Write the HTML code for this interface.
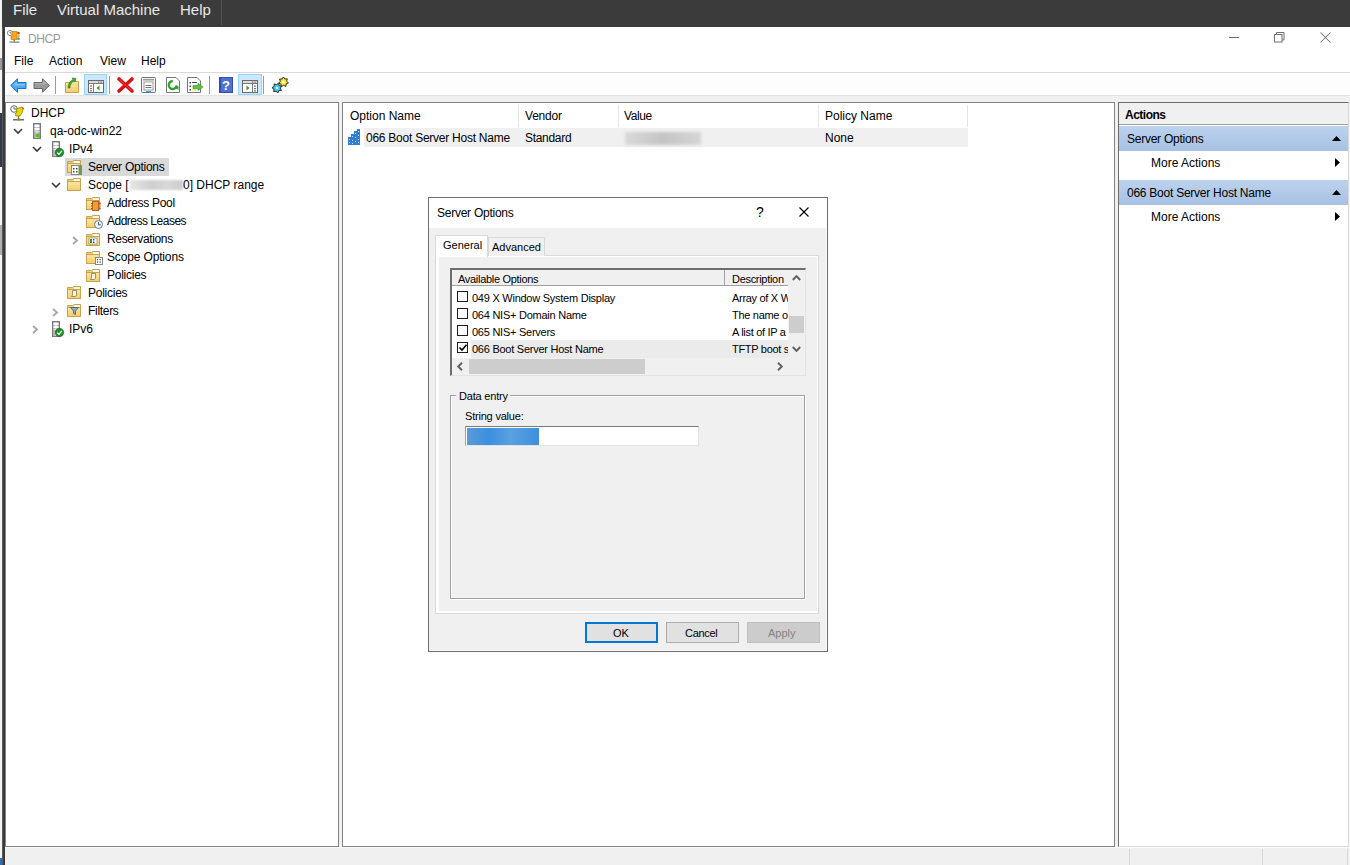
<!DOCTYPE html>
<html><head><meta charset="utf-8">
<style>
*{box-sizing:border-box}
html,body{margin:0;padding:0}
body{width:1350px;height:865px;overflow:hidden;position:relative;background:#f0f0f0;font-family:"Liberation Sans",sans-serif;font-size:12px;color:#000}
.a{position:absolute}
.t{position:absolute;white-space:nowrap;line-height:18px;height:18px}
.s11{font-size:11px}
svg{position:absolute;overflow:visible}
</style></head><body>


<svg width="0" height="0" style="position:absolute;left:0;top:0">
<defs>
<linearGradient id="gFold" x1="0" y1="0" x2="0" y2="1"><stop offset="0" stop-color="#fbe6a6"/><stop offset="1" stop-color="#f3cd6b"/></linearGradient>
<linearGradient id="gTower" x1="0" y1="0" x2="1" y2="0"><stop offset="0" stop-color="#9a9a9a"/><stop offset="0.5" stop-color="#d8d8d8"/><stop offset="1" stop-color="#8a8a8a"/></linearGradient>
<linearGradient id="gBand" x1="0" y1="0" x2="0" y2="1"><stop offset="0" stop-color="#bdd4ef"/><stop offset="1" stop-color="#a6c0e2"/></linearGradient>
</defs></svg>

<!-- VM host strip left -->
<div class="a" style="left:0;top:0;width:2px;height:865px;background:#f4f4f4"></div>
<div class="a" style="left:0;top:58px;width:2px;height:12px;background:#9a9a9a"></div>
<div class="a" style="left:0;top:113px;width:2px;height:54px;background:#2f3b4a"></div>
<div class="a" style="left:0;top:225px;width:2px;height:30px;background:#b0b0b0"></div>
<div class="a" style="left:0;top:858px;width:2px;height:7px;background:#2a6fc0"></div>
<div class="a" style="left:2px;top:0;width:3px;height:865px;background:#3a3a3a;border-left:1px solid #5a5a5a"></div>

<!-- VM top bar -->
<div class="a" style="left:2px;top:0;width:1348px;height:27px;background:#3b3b3b"></div>
<div class="t" style="left:13px;top:-2px;font-size:15px;color:#e8e8e8;line-height:24px;height:24px">File</div>
<div class="t" style="left:57px;top:-2px;font-size:15px;color:#e8e8e8;line-height:24px;height:24px">Virtual Machine</div>
<div class="t" style="left:180px;top:-2px;font-size:15px;color:#e8e8e8;line-height:24px;height:24px">Help</div>
<div class="a" style="left:221px;top:0;width:1px;height:25px;background:#555"></div>

<!-- MMC window -->
<div class="a" style="left:5px;top:27px;width:1345px;height:838px;background:#fff"></div>

<!-- title bar -->
<div class="t" style="left:28px;top:30px;color:#999;letter-spacing:-0.4px">DHCP</div>
<!-- menu bar -->
<div class="t" style="left:14px;top:52px">File</div>
<div class="t" style="left:49px;top:52px">Action</div>
<div class="t" style="left:100px;top:52px">View</div>
<div class="t" style="left:141px;top:52px">Help</div>
<div class="a" style="left:5px;top:72px;width:1345px;height:1px;background:#d9d9d9"></div>

<!-- title bar icon & buttons -->
<svg style="left:7px;top:30px" width="14" height="13" viewBox="0 0 14 13">
 <circle cx="3" cy="3" r="2.6" fill="#fff" stroke="#777" stroke-width="0.8"/>
 <path d="M3 1.5 V3 H4.5" stroke="#556" stroke-width="0.7" fill="none"/>
 <path d="M5 1.5 H10 V9.5 H4 V6 H5Z" fill="#f5a623" stroke="#b87010" stroke-width="0.6"/>
 <circle cx="11.5" cy="3" r="1.3" fill="#e03020"/>
 <circle cx="11.5" cy="6" r="1.3" fill="#e0c000"/>
 <circle cx="11.5" cy="8.8" r="1.3" fill="#2a90d0"/>
 <rect x="6.5" y="9.5" width="1.5" height="2" fill="#b87010"/>
 <rect x="2.5" y="11.5" width="10" height="1.2" fill="#7a7a7a"/>
</svg>
<div class="a" style="left:1229px;top:37px;width:10px;height:1px;background:#707070"></div>
<svg style="left:1274px;top:32px" width="11" height="11" viewBox="0 0 11 11"><rect x="0.5" y="2.5" width="7.5" height="7.5" fill="none" stroke="#707070" stroke-width="1"/><path d="M2.5 2.5 V0.5 H10 V8 H8" fill="none" stroke="#707070" stroke-width="1"/></svg>
<svg style="left:1320px;top:32px" width="11" height="11"><path d="M0.5 0.5 L10.5 10.5 M10.5 0.5 L0.5 10.5" stroke="#707070" stroke-width="1.05" fill="none"/></svg>

<!-- toolbar -->
<div class="a" style="left:5px;top:73px;width:1345px;height:22px;background:#fdfdfd"></div>
<svg style="left:10px;top:78px" width="17" height="15" viewBox="0 0 17 15"><path d="M0.7 7.5 L7.5 0.7 V4.5 H16 V10.5 H7.5 V14.3Z" fill="#4aa8f5" stroke="#1b6fd0" stroke-width="1"/><path d="M3 7.5 L7 3.5 V6 H15 V7.5Z" fill="#9fd3ff" opacity="0.7"/></svg>
<svg style="left:33px;top:78px" width="17" height="15" viewBox="0 0 17 15"><path d="M16.3 7.5 L9.5 0.7 V4.5 H1 V10.5 H9.5 V14.3Z" fill="#9a9a9a" stroke="#666" stroke-width="1"/><path d="M1.5 5 H10 V2 L14 6 H1.5Z" fill="#bdbdbd" opacity="0.7"/></svg>
<div class="a" style="left:55px;top:76px;width:1px;height:18px;background:#9a9a9a"></div>
<svg style="left:65px;top:77px" width="15" height="16" viewBox="0 0 15 16"><path d="M0.5 5.5 H5 L6 4.5 H13.5 V15.5 H0.5Z" fill="url(#gFold)" stroke="#c8a24e"/><path d="M3 11 C3 7 5 4 8 2.5 L7 1 L11 1.5 L10 5 L9 3.8 C6.5 5 5 8 5 11Z" fill="#3fae2a" stroke="#247a18" stroke-width="0.6"/></svg>
<div class="a" style="left:84px;top:74px;width:23px;height:21px;background:#cce8ff;border:1px solid #99d1ff"></div>
<svg style="left:88px;top:80px" width="16" height="13" viewBox="0 0 16 13"><rect x="0.5" y="0.5" width="15" height="12" fill="#fff" stroke="#6a6a6a"/><rect x="1" y="1" width="14" height="2.5" fill="#dcdcdc"/><line x1="1" y1="3.5" x2="15" y2="3.5" stroke="#7a7a7a"/><rect x="10" y="1.5" width="1.2" height="1.2" fill="#666"/><rect x="12.5" y="1.5" width="1.2" height="1.2" fill="#666"/><line x1="5.5" y1="4" x2="5.5" y2="12" stroke="#7a7a7a"/><rect x="2" y="5.5" width="2" height="1.2" fill="#777"/><rect x="2" y="8" width="2" height="1.2" fill="#777"/><rect x="2" y="10.2" width="2" height="1.2" fill="#777"/><path d="M11.5 5.5 V10.5 L8.5 8Z" fill="#35a02a"/></svg>
<div class="a" style="left:109px;top:76px;width:1px;height:18px;background:#9a9a9a"></div>
<svg style="left:117px;top:77px" width="17" height="16" viewBox="0 0 17 16"><path d="M2 2 L15 14 M15 2 L2 14" stroke="#d81010" stroke-width="3.6" stroke-linecap="round"/><path d="M2.5 2.5 L14.5 13.5" stroke="#ff6a6a" stroke-width="1" opacity="0.6"/></svg>
<svg style="left:141px;top:77px" width="15" height="16" viewBox="0 0 15 16"><rect x="0.5" y="0.5" width="14" height="15" rx="1" fill="#f4f4f4" stroke="#707070"/><rect x="2" y="2" width="11" height="1.5" fill="#9a9a9a"/><rect x="3" y="5" width="9" height="8" fill="#fff" stroke="#8a8a8a" stroke-width="0.8"/><rect x="4.5" y="8" width="6" height="1" fill="#777"/><rect x="4.5" y="10" width="6" height="1" fill="#777"/><rect x="5" y="14" width="5" height="1.5" fill="#3a9ae8"/></svg>
<svg style="left:166px;top:77px" width="14" height="16" viewBox="0 0 14 16"><path d="M0.5 0.5 H10 L13.5 4 V15.5 H0.5Z" fill="#fff" stroke="#777"/><path d="M6.8 4 A4 4 0 1 0 10.8 8.5" stroke="#2aa02a" stroke-width="2.4" fill="none"/><path d="M9 11 L12.5 9 L12.5 12.8Z" fill="#2aa02a"/></svg>
<svg style="left:187px;top:77px" width="17" height="16" viewBox="0 0 17 16"><path d="M0.5 0.5 H10 L13.5 4 V15.5 H0.5Z" fill="#fff" stroke="#777"/><g fill="#444"><rect x="2.5" y="5" width="1.5" height="1.5"/><rect x="2.5" y="8.5" width="1.5" height="1.5"/><rect x="2.5" y="12" width="1.5" height="1.5"/><rect x="5" y="5" width="5" height="1"/></g><path d="M6 8.5 H11 V6.5 L16 10 L11 13.5 V11.5 H6Z" fill="#5ac83a" stroke="#2f8a20" stroke-width="0.6"/><rect x="5" y="12" width="4" height="1.5" fill="#f0e060"/></svg>
<div class="a" style="left:209px;top:76px;width:1px;height:18px;background:#9a9a9a"></div>
<svg style="left:219px;top:77px" width="14" height="16" viewBox="0 0 14 16"><rect x="0" y="0" width="14" height="16" fill="#2f4fb0"/><rect x="2" y="1" width="11" height="14" fill="#4f70d0"/><text x="7" y="13" font-family="Liberation Sans" font-size="13" fill="#fff" text-anchor="middle" font-weight="bold">?</text></svg>
<div class="a" style="left:238px;top:74px;width:24px;height:21px;background:#cce8ff;border:1px solid #99d1ff"></div>
<svg style="left:242px;top:80px" width="16" height="13" viewBox="0 0 16 13"><rect x="0.5" y="0.5" width="15" height="12" fill="#fff" stroke="#6a6a6a"/><rect x="1" y="1" width="14" height="2.5" fill="#dcdcdc"/><line x1="1" y1="3.5" x2="15" y2="3.5" stroke="#7a7a7a"/><rect x="10" y="1.5" width="1.2" height="1.2" fill="#666"/><rect x="12.5" y="1.5" width="1.2" height="1.2" fill="#666"/><line x1="10.5" y1="4" x2="10.5" y2="12" stroke="#7a7a7a"/><rect x="12" y="5.5" width="2" height="1.2" fill="#777"/><rect x="12" y="8" width="2" height="1.2" fill="#777"/><rect x="12" y="10.2" width="2" height="1.2" fill="#777"/><path d="M4.5 5.5 V10.5 L7.5 8Z" fill="#35a02a"/></svg>
<div class="a" style="left:263px;top:76px;width:1px;height:18px;background:#9a9a9a"></div>
<svg style="left:272px;top:77px" width="17" height="16" viewBox="0 0 17 16"><path d="M9.4 13.4 L6.9 13.7 L5.9 15.9 L4.1 14.2 L1.7 14.7 L2.0 12.3 L0.0 10.7 L2.1 9.4 L2.1 6.9 L4.4 7.7 L6.4 6.2 L7.2 8.5 L9.6 9.1 L8.3 11.2Z" fill="#3cc8f0" stroke="#1a1a1a" stroke-width="0.9"/><circle cx="5" cy="11" r="1.2" fill="#fff"/><path d="M16.4 6.0 L14.1 7.0 L13.8 9.5 L11.6 8.3 L9.4 9.6 L9.0 7.1 L6.7 6.2 L8.3 4.3 L7.5 2.0 L10.0 2.1 L11.4 0.0 L12.9 2.0 L15.3 1.8 L14.7 4.2Z" fill="#f5e62a" stroke="#1a1a1a" stroke-width="0.9"/><circle cx="11.5" cy="5" r="1.2" fill="#fff"/></svg>

<!-- toolbar strip bottom -->
<div class="a" style="left:5px;top:95px;width:1345px;height:1px;background:#e3e3e3"></div>
<div class="a" style="left:5px;top:96px;width:1345px;height:6px;background:#f0f0f0"></div>

<!-- panes area background -->
<div class="a" style="left:5px;top:102px;width:1345px;height:763px;background:#f0f0f0"></div>

<!-- left pane -->
<div class="a" style="left:5px;top:102px;width:334px;height:745px;background:#fff;border:1px solid #828282"></div>
<!-- center pane -->
<div class="a" style="left:342px;top:102px;width:773px;height:745px;background:#fff;border:1px solid #828282"></div>
<!-- actions pane -->
<div class="a" style="left:1118px;top:102px;width:231px;height:745px;background:#fff;border:1px solid #dcdcdc;border-left-color:#6d6d6d;border-top-color:#6d6d6d"></div>

<!-- status bar -->
<div class="a" style="left:5px;top:847px;width:1345px;height:1px;background:#fbfbfb"></div>
<div class="a" style="left:1129px;top:849px;width:1px;height:16px;background:#d7d7d7"></div>
<div class="a" style="left:1262px;top:849px;width:1px;height:16px;background:#d7d7d7"></div>
<div class="a" style="left:1347px;top:849px;width:1px;height:16px;background:#d7d7d7"></div>


<!-- TREE -->
<div class="a" style="left:65px;top:158px;width:104px;height:18px;background:#d9d9d9"></div>
<div class="t" style="left:31px;top:104px">DHCP</div>
<div class="t" style="left:50px;top:122px">qa-odc-win22</div>
<div class="t" style="left:69px;top:140px">IPv4</div>
<div class="t" style="left:88px;top:158px;letter-spacing:-0.25px">Server Options</div>
<div class="t" style="left:88px;top:176px">Scope [</div>
<div class="a" style="left:130px;top:180px;width:53px;height:10px;background:linear-gradient(90deg,#e6e6e6,#cfcfcf 40%,#d8d8d8 70%,#cccccc);filter:blur(1px)"></div>
<div class="t" style="left:183px;top:176px">0] DHCP range</div>
<div class="t" style="left:107px;top:194px;letter-spacing:-0.3px">Address Pool</div>
<div class="t" style="left:107px;top:212px;letter-spacing:-0.5px">Address Leases</div>
<div class="t" style="left:107px;top:230px;letter-spacing:-0.35px">Reservations</div>
<div class="t" style="left:107px;top:248px;letter-spacing:-0.15px">Scope Options</div>
<div class="t" style="left:107px;top:266px;letter-spacing:-0.25px">Policies</div>
<div class="t" style="left:88px;top:284px;letter-spacing:-0.25px">Policies</div>
<div class="t" style="left:88px;top:302px;letter-spacing:-0.3px">Filters</div>
<div class="t" style="left:69px;top:320px">IPv6</div>


<!-- tree icons -->
<svg style="left:10px;top:105px" width="15" height="16" viewBox="0 0 15 16">
 <circle cx="4" cy="4" r="3.3" fill="#fff" stroke="#666" stroke-width="1"/>
 <path d="M4 2 V4 H6" stroke="#555" stroke-width="0.9" fill="none"/>
 <path d="M6 4 L9 3 L12 2 L13 4 L12 8 L10 11 L6 11 L5 9 L7 7Z" fill="#e8d800" stroke="#8a8a00" stroke-width="0.8"/>
 <path d="M12 2 L14 3 L13 5Z" fill="#e03010"/>
 <rect x="8" y="11" width="1" height="3" fill="#777"/>
 <rect x="3" y="14" width="11" height="1.5" fill="#6a6a6a"/>
 <rect x="7" y="13.5" width="3" height="2" fill="#8a9a00"/>
</svg>
<svg style="left:13px;top:128px" width="10" height="6"><path d="M1 1 L5 5 L9 1" stroke="#3c3c3c" stroke-width="1.6" fill="none"/></svg>
<svg style="left:33px;top:123px" width="8" height="16" viewBox="0 0 8 16"><rect x="0.5" y="0.5" width="7" height="15" fill="url(#gTower)" stroke="#7a7a7a"/>
 <rect x="1.5" y="2" width="5" height="2" fill="#fff"/>
 <rect x="1.5" y="5" width="5" height="2" fill="#fff"/>
 <rect x="1.5" y="8" width="5" height="1" fill="#e0e0e0"/></svg>
<svg style="left:35px;top:133px" width="5" height="5"><circle cx="2.5" cy="2.5" r="2" fill="#58c020"/></svg>
<svg style="left:32px;top:146px" width="10" height="6"><path d="M1 1 L5 5 L9 1" stroke="#3c3c3c" stroke-width="1.6" fill="none"/></svg>
<svg style="left:52px;top:141px" width="8" height="16" viewBox="0 0 8 16"><rect x="0.5" y="0.5" width="7" height="15" fill="url(#gTower)" stroke="#7a7a7a"/>
 <rect x="1.5" y="2" width="5" height="2" fill="#fff"/>
 <rect x="1.5" y="5" width="5" height="2" fill="#fff"/>
 <rect x="1.5" y="8" width="5" height="1" fill="#e0e0e0"/></svg>
<svg style="left:55px;top:148px" width="9" height="9" viewBox="0 0 9 9"><circle cx="4.5" cy="4.5" r="4.2" fill="#1f8f2a" stroke="#0f5e16" stroke-width="0.6"/>
 <path d="M2.2 4.6 L3.9 6.3 L6.9 2.8" stroke="#fff" stroke-width="1.3" fill="none"/></svg>
<svg style="left:67px;top:160px" width="14" height="13" viewBox="0 0 14 13"><path d="M0.5 1.5 H5.5 L6.5 0.5 H13.5 V12.5 H0.5Z" fill="#f1cf77" stroke="#c8a24e" stroke-width="1"/>
 <path d="M7 1.2 H12.8 V3 H7Z" fill="#fff"/>
 <path d="M0.5 3.5 H13.5 V12.5 H0.5Z" fill="url(#gFold)" stroke="#c8a24e" stroke-width="1"/></svg>
<svg style="left:71px;top:165px" width="11" height="10" viewBox="0 0 11 10"><rect x="0.5" y="0.5" width="10" height="9" fill="#fff" stroke="#888"/><rect x="2" y="3" width="1.5" height="1.5" fill="#444"/><rect x="5" y="3" width="1.5" height="1.5" fill="#444"/><rect x="2" y="6" width="1.5" height="1.5" fill="#444"/><rect x="5" y="6" width="1.5" height="1.5" fill="#444"/><rect x="7.5" y="1" width="2.5" height="8" fill="#6a9a50"/></svg>
<svg style="left:51px;top:182px" width="10" height="6"><path d="M1 1 L5 5 L9 1" stroke="#3c3c3c" stroke-width="1.6" fill="none"/></svg>
<svg style="left:67px;top:178px" width="14" height="13" viewBox="0 0 14 13"><path d="M0.5 1.5 H5.5 L6.5 0.5 H13.5 V12.5 H0.5Z" fill="#f1cf77" stroke="#c8a24e" stroke-width="1"/>
 <path d="M7 1.2 H12.8 V3 H7Z" fill="#fff"/>
 <path d="M0.5 3.5 H13.5 V12.5 H0.5Z" fill="url(#gFold)" stroke="#c8a24e" stroke-width="1"/></svg>
<!-- sub folders -->
<svg style="left:86px;top:197px" width="14" height="13" viewBox="0 0 14 13"><path d="M0.5 1.5 H5.5 L6.5 0.5 H13.5 V12.5 H0.5Z" fill="#f1cf77" stroke="#c8a24e" stroke-width="1"/>
 <path d="M7 1.2 H12.8 V3 H7Z" fill="#fff"/>
 <path d="M0.5 3.5 H13.5 V12.5 H0.5Z" fill="url(#gFold)" stroke="#c8a24e" stroke-width="1"/></svg>
<svg style="left:91px;top:201px" width="10" height="10" viewBox="0 0 10 10"><rect x="1.5" y="0.5" width="6" height="9" fill="#f39a3a" stroke="#b8651a"/><g fill="#9a5a20"><rect x="0" y="2" width="2" height="1"/><rect x="0" y="4.5" width="2" height="1"/><rect x="0" y="7" width="2" height="1"/></g><circle cx="8.8" cy="2.5" r="1.1" fill="#e03020"/><circle cx="8.8" cy="5" r="1.1" fill="#e0a000"/><circle cx="8.8" cy="7.5" r="1.1" fill="#2090d0"/></svg>
<svg style="left:86px;top:215px" width="14" height="13" viewBox="0 0 14 13"><path d="M0.5 1.5 H5.5 L6.5 0.5 H13.5 V12.5 H0.5Z" fill="#f1cf77" stroke="#c8a24e" stroke-width="1"/>
 <path d="M7 1.2 H12.8 V3 H7Z" fill="#fff"/>
 <path d="M0.5 3.5 H13.5 V12.5 H0.5Z" fill="url(#gFold)" stroke="#c8a24e" stroke-width="1"/></svg>
<svg style="left:94px;top:220px" width="9" height="9" viewBox="0 0 9 9"><circle cx="4.5" cy="4.5" r="4" fill="#eaf2fb" stroke="#6a7f99" stroke-width="1"/><path d="M4.5 2 V4.8 H6.8" stroke="#445" stroke-width="0.9" fill="none"/></svg>
<svg style="left:72px;top:236px" width="6" height="9"><path d="M1 1 L5 4.5 L1 8" stroke="#a8a8a8" stroke-width="1.9" fill="none"/></svg>
<svg style="left:86px;top:233px" width="14" height="13" viewBox="0 0 14 13"><path d="M0.5 1.5 H5.5 L6.5 0.5 H13.5 V12.5 H0.5Z" fill="#f1cf77" stroke="#c8a24e" stroke-width="1"/>
 <path d="M7 1.2 H12.8 V3 H7Z" fill="#fff"/>
 <path d="M0.5 3.5 H13.5 V12.5 H0.5Z" fill="url(#gFold)" stroke="#c8a24e" stroke-width="1"/></svg>
<svg style="left:89px;top:238px" width="8" height="6" viewBox="0 0 8 6"><rect x="0" y="0" width="8" height="6" fill="#fff" stroke="#777" stroke-width="0.6"/><rect x="1" y="1" width="2" height="4" fill="#3a8a30"/><rect x="4" y="1" width="1.5" height="1.5" fill="#555"/><rect x="4" y="3.5" width="1.5" height="1.5" fill="#555"/></svg>
<svg style="left:86px;top:251px" width="14" height="13" viewBox="0 0 14 13"><path d="M0.5 1.5 H5.5 L6.5 0.5 H13.5 V12.5 H0.5Z" fill="#f1cf77" stroke="#c8a24e" stroke-width="1"/>
 <path d="M7 1.2 H12.8 V3 H7Z" fill="#fff"/>
 <path d="M0.5 3.5 H13.5 V12.5 H0.5Z" fill="url(#gFold)" stroke="#c8a24e" stroke-width="1"/></svg>
<svg style="left:95px;top:257px" width="8" height="8" viewBox="0 0 8 8"><rect x="0.5" y="0.5" width="7" height="7" fill="#fff" stroke="#888"/><rect x="2" y="2" width="1.2" height="1.2" fill="#444"/><rect x="4.5" y="2" width="1.2" height="1.2" fill="#444"/><rect x="2" y="4.5" width="1.2" height="1.2" fill="#444"/><rect x="4.5" y="4.5" width="1.2" height="1.2" fill="#444"/></svg>
<svg style="left:86px;top:269px" width="14" height="13" viewBox="0 0 14 13"><path d="M0.5 1.5 H5.5 L6.5 0.5 H13.5 V12.5 H0.5Z" fill="#f1cf77" stroke="#c8a24e" stroke-width="1"/>
 <path d="M7 1.2 H12.8 V3 H7Z" fill="#fff"/>
 <path d="M0.5 3.5 H13.5 V12.5 H0.5Z" fill="url(#gFold)" stroke="#c8a24e" stroke-width="1"/></svg>
<svg style="left:90px;top:273px" width="6" height="7" viewBox="0 0 6 7"><path d="M1.5 0.5 H5.5 V5 L4.5 6.5 H0.5 L1.5 5Z" fill="#fff8e0" stroke="#8a7a50" stroke-width="0.8"/></svg>
<svg style="left:67px;top:286px" width="14" height="13" viewBox="0 0 14 13"><path d="M0.5 1.5 H5.5 L6.5 0.5 H13.5 V12.5 H0.5Z" fill="#f1cf77" stroke="#c8a24e" stroke-width="1"/>
 <path d="M7 1.2 H12.8 V3 H7Z" fill="#fff"/>
 <path d="M0.5 3.5 H13.5 V12.5 H0.5Z" fill="url(#gFold)" stroke="#c8a24e" stroke-width="1"/></svg>
<svg style="left:71px;top:290px" width="6" height="7" viewBox="0 0 6 7"><path d="M1.5 0.5 H5.5 V5 L4.5 6.5 H0.5 L1.5 5Z" fill="#fff8e0" stroke="#8a7a50" stroke-width="0.8"/></svg>
<svg style="left:52px;top:308px" width="6" height="9"><path d="M1 1 L5 4.5 L1 8" stroke="#a8a8a8" stroke-width="1.9" fill="none"/></svg>
<svg style="left:67px;top:304px" width="14" height="13" viewBox="0 0 14 13"><path d="M0.5 1.5 H5.5 L6.5 0.5 H13.5 V12.5 H0.5Z" fill="#f1cf77" stroke="#c8a24e" stroke-width="1"/>
 <path d="M7 1.2 H12.8 V3 H7Z" fill="#fff"/>
 <path d="M0.5 3.5 H13.5 V12.5 H0.5Z" fill="url(#gFold)" stroke="#c8a24e" stroke-width="1"/></svg>
<svg style="left:70px;top:307px" width="9" height="8" viewBox="0 0 9 8"><path d="M0.5 0.5 H8.5 L5.5 4 V7.5 L3.5 6.5 V4Z" fill="#8ea8c8" stroke="#4a5a70" stroke-width="0.8"/></svg>
<svg style="left:32px;top:325px" width="6" height="9"><path d="M1 1 L5 4.5 L1 8" stroke="#a8a8a8" stroke-width="1.9" fill="none"/></svg>
<svg style="left:52px;top:321px" width="8" height="16" viewBox="0 0 8 16"><rect x="0.5" y="0.5" width="7" height="15" fill="url(#gTower)" stroke="#7a7a7a"/>
 <rect x="1.5" y="2" width="5" height="2" fill="#fff"/>
 <rect x="1.5" y="5" width="5" height="2" fill="#fff"/>
 <rect x="1.5" y="8" width="5" height="1" fill="#e0e0e0"/></svg>
<svg style="left:55px;top:328px" width="9" height="9" viewBox="0 0 9 9"><circle cx="4.5" cy="4.5" r="4.2" fill="#1f8f2a" stroke="#0f5e16" stroke-width="0.6"/>
 <path d="M2.2 4.6 L3.9 6.3 L6.9 2.8" stroke="#fff" stroke-width="1.3" fill="none"/></svg>
<!-- list row icon -->
<svg style="left:348px;top:129px" width="12" height="16" viewBox="0 0 12 16"><path d="M0 16 V8 H3 V5 H6 V2 H9 V0 H12 V16Z" fill="#2f7fd0"/><g fill="#cfe4fa"><rect x="1" y="10" width="1" height="1"/><rect x="4" y="7" width="1" height="1"/><rect x="7" y="4" width="1" height="1"/><rect x="10" y="2" width="1" height="1"/><rect x="1" y="13" width="1" height="1"/><rect x="4" y="11" width="1" height="1"/><rect x="7" y="8" width="1" height="1"/><rect x="10" y="6" width="1" height="1"/><rect x="7" y="12" width="1" height="1"/><rect x="10" y="10" width="1" height="1"/><rect x="10" y="13" width="1" height="1"/><rect x="4" y="14" width="1" height="1"/></g></svg>

<!-- CENTER LIST -->
<div class="a" style="left:518px;top:105px;width:1px;height:22px;background:#e5e5e5"></div>
<div class="a" style="left:618px;top:105px;width:1px;height:22px;background:#e5e5e5"></div>
<div class="a" style="left:818px;top:105px;width:1px;height:22px;background:#e5e5e5"></div>
<div class="a" style="left:967px;top:105px;width:1px;height:22px;background:#e5e5e5"></div>
<div class="t" style="left:350px;top:107px">Option Name</div>
<div class="t" style="left:525px;top:107px;letter-spacing:-0.2px">Vendor</div>
<div class="t" style="left:624px;top:107px;letter-spacing:-0.4px">Value</div>
<div class="t" style="left:825px;top:107px">Policy Name</div>
<div class="a" style="left:364px;top:128px;width:604px;height:19px;background:#f0f0f0"></div>
<div class="t" style="left:366px;top:129px;letter-spacing:-0.25px">066 Boot Server Host Name</div>
<div class="t" style="left:525px;top:129px;letter-spacing:-0.3px">Standard</div>
<div class="a" style="left:625px;top:132px;width:76px;height:13px;background:linear-gradient(90deg,#d9d9d9,#c4c4c4 50%,#d6d6d6);filter:blur(1.5px)"></div>
<div class="t" style="left:825px;top:129px">None</div>

<!-- ACTIONS -->
<div class="a" style="left:1119px;top:103px;width:229px;height:21px;background:#f0f0f0"></div>
<div class="a" style="left:1119px;top:124px;width:229px;height:1px;background:#a0a0a0"></div>
<div class="t" style="left:1125px;top:106px;font-weight:bold;letter-spacing:-0.5px">Actions</div>
<div class="a" style="left:1119px;top:126px;width:229px;height:25px;background:linear-gradient(180deg,#bcd3ee,#a7c1e3)"></div>
<div class="t" style="left:1127px;top:130px;letter-spacing:-0.25px">Server Options</div>
<svg style="left:1332px;top:136px" width="9" height="5"><path d="M0 5 L4.5 0 L9 5Z" fill="#000"/></svg>
<div class="t" style="left:1151px;top:154px">More Actions</div>
<svg style="left:1335px;top:158px" width="5" height="9"><path d="M0 0 L5 4.5 L0 9Z" fill="#000"/></svg>
<div class="a" style="left:1119px;top:180px;width:229px;height:25px;background:linear-gradient(180deg,#bcd3ee,#a7c1e3)"></div>
<div class="t" style="left:1127px;top:184px;letter-spacing:-0.25px">066 Boot Server Host Name</div>
<svg style="left:1332px;top:190px" width="9" height="5"><path d="M0 5 L4.5 0 L9 5Z" fill="#000"/></svg>
<div class="t" style="left:1151px;top:208px">More Actions</div>
<svg style="left:1335px;top:212px" width="5" height="9"><path d="M0 0 L5 4.5 L0 9Z" fill="#000"/></svg>

<!-- DIALOG -->
<div class="a" style="left:428px;top:197px;width:400px;height:455px;background:#f0f0f0;border:1px solid #6e6e6e"></div>
<div class="a" style="left:429px;top:198px;width:398px;height:30px;background:#fff"></div>
<div class="a" style="left:826px;top:228px;width:1px;height:423px;background:#fafafa"></div>
<div class="a" style="left:429px;top:650px;width:398px;height:1px;background:#fafafa"></div>
<div class="t" style="left:437px;top:204px;letter-spacing:-0.25px">Server Options</div>
<div class="t" style="left:756px;top:203px;font-size:14px">?</div>
<svg style="left:799px;top:207px" width="10" height="10"><path d="M0.5 0.5 L9.5 9.5 M9.5 0.5 L0.5 9.5" stroke="#000" stroke-width="1.1" fill="none"/></svg>

<!-- tab panel -->
<div class="a" style="left:435px;top:255px;width:384px;height:359px;background:#fff;border:1px solid #d9d9d9"></div>
<div class="a" style="left:439px;top:257px;width:378px;height:354px;background:#f0f0f0"></div>
<div class="a" style="left:488px;top:237px;width:57px;height:19px;background:#f0f0f0;border:1px solid #d9d9d9;border-bottom:none"></div>
<div class="a" style="left:435px;top:235px;width:53px;height:22px;background:#fff;border:1px solid #d9d9d9;border-bottom:none"></div>
<div class="t s11" style="left:443px;top:236px">General</div>
<div class="t s11" style="left:492px;top:238px">Advanced</div>

<!-- list view -->
<div class="a" style="left:450px;top:268px;width:356px;height:108px;background:#fff;border:1px solid #e3e3e3;border-top:2px solid #6e6e6e;border-left:2px solid #6e6e6e"></div>
<div class="a" style="left:452px;top:270px;width:336px;height:15px;background:#f0f0f0"></div>
<div class="a" style="left:452px;top:285px;width:336px;height:1px;background:#a0a0a0"></div>
<div class="a" style="left:724px;top:270px;width:1px;height:15px;background:#a0a0a0"></div>
<div class="t s11" style="left:458px;top:270px;letter-spacing:-0.3px">Available Options</div>
<div class="t s11" style="left:732px;top:270px;letter-spacing:-0.3px">Description</div>
<div class="a" style="left:471px;top:340px;width:317px;height:18px;background:#ebebeb"></div>
<div class="a" style="left:457px;top:291px;width:11px;height:11px;border:1px solid #1e1e1e;background:#fff"></div>
<div class="t s11" style="left:472px;top:289px;letter-spacing:-0.25px">049 X Window System Display</div>
<div class="a" style="left:732px;top:289px;width:56px;height:18px;overflow:hidden"><div class="t s11" style="left:0;top:0;letter-spacing:-0.3px">Array of X W</div></div>
<div class="a" style="left:457px;top:308px;width:11px;height:11px;border:1px solid #1e1e1e;background:#fff"></div>
<div class="t s11" style="left:472px;top:306px;letter-spacing:-0.25px">064 NIS+ Domain Name</div>
<div class="a" style="left:732px;top:306px;width:56px;height:18px;overflow:hidden"><div class="t s11" style="left:0;top:0;letter-spacing:-0.3px">The name o</div></div>
<div class="a" style="left:457px;top:325px;width:11px;height:11px;border:1px solid #1e1e1e;background:#fff"></div>
<div class="t s11" style="left:472px;top:323px;letter-spacing:-0.25px">065 NIS+ Servers</div>
<div class="a" style="left:732px;top:323px;width:56px;height:18px;overflow:hidden"><div class="t s11" style="left:0;top:0;letter-spacing:-0.3px">A list of IP a</div></div>
<div class="a" style="left:457px;top:342px;width:11px;height:11px;border:1px solid #1e1e1e;background:#fff"></div>
<svg style="left:459px;top:344px" width="8" height="7"><path d="M0.5 3.5 L3 6 L7.5 0.8" stroke="#000" stroke-width="1.6" fill="none"/></svg>
<div class="t s11" style="left:472px;top:340px;letter-spacing:-0.25px">066 Boot Server Host Name</div>
<div class="a" style="left:732px;top:340px;width:56px;height:18px;overflow:hidden"><div class="t s11" style="left:0;top:0;letter-spacing:-0.3px">TFTP boot s</div></div>

<!-- v scrollbar -->
<div class="a" style="left:788px;top:270px;width:17px;height:88px;background:#f0f0f0"></div>
<svg style="left:792px;top:275px" width="9" height="6"><path d="M0.8 5 L4.5 1.2 L8.2 5" stroke="#606060" stroke-width="1.9" fill="none"/></svg>
<div class="a" style="left:789px;top:316px;width:15px;height:17px;background:#cdcdcd"></div>
<svg style="left:792px;top:346px" width="9" height="6"><path d="M0.8 1 L4.5 4.8 L8.2 1" stroke="#606060" stroke-width="1.9" fill="none"/></svg>
<!-- h scrollbar -->
<div class="a" style="left:452px;top:358px;width:353px;height:17px;background:#f0f0f0"></div>
<svg style="left:457px;top:362px" width="6" height="9"><path d="M5 0.8 L1.2 4.5 L5 8.2" stroke="#606060" stroke-width="1.9" fill="none"/></svg>
<div class="a" style="left:469px;top:359px;width:176px;height:15px;background:#cdcdcd"></div>
<svg style="left:777px;top:362px" width="6" height="9"><path d="M1 0.8 L4.8 4.5 L1 8.2" stroke="#606060" stroke-width="1.9" fill="none"/></svg>

<!-- group box -->
<div class="a" style="left:451px;top:396px;width:355px;height:204px;border:1px solid #fff"></div>
<div class="a" style="left:450px;top:395px;width:355px;height:204px;border:1px solid #a0a0a0"></div>
<div class="a" style="left:456px;top:390px;width:54px;height:12px;background:#f0f0f0"></div>
<div class="t s11" style="left:459px;top:387px;letter-spacing:-0.2px">Data entry</div>
<div class="t s11" style="left:465px;top:407px;letter-spacing:-0.2px">String value:</div>
<div class="a" style="left:465px;top:426px;width:234px;height:20px;background:#fff;border:1px solid #e3e3e3;border-top:1px solid #7a7a7a;border-left:1px solid #a0a0a0"></div>
<div class="a" style="left:467px;top:428px;width:72px;height:17px;background:linear-gradient(90deg,#5a9bd8,#3a8fe0 30%,#5aa0e0 60%,#3d90dc);"></div>

<!-- buttons -->
<div class="a" style="left:585px;top:622px;width:73px;height:21px;background:#e1e1e1;border:2px solid #0078d7"></div>
<div class="t s11" style="left:613px;top:624px">OK</div>
<div class="a" style="left:666px;top:622px;width:73px;height:21px;background:#e1e1e1;border:1px solid #adadad"></div>
<div class="t s11" style="left:685px;top:624px;letter-spacing:-0.3px">Cancel</div>
<div class="a" style="left:747px;top:622px;width:73px;height:21px;background:#cccccc;border:1px solid #bfbfbf"></div>
<div class="t s11" style="left:768px;top:624px;color:#838383">Apply</div>
</body></html>
